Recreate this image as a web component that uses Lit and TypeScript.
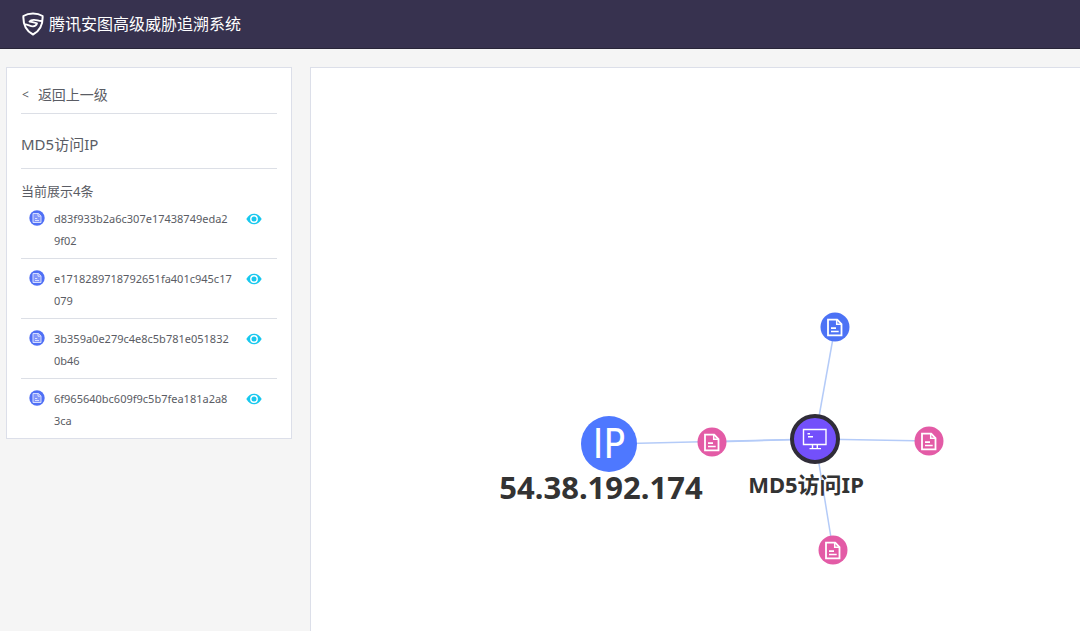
import { LitElement, html, css, svg } from "lit";
import { customElement, property } from "lit/decorators.js";

const FONT = css`"Noto Sans", "Noto Sans CJK SC", sans-serif`;

const HASHES = [
  "d83f933b2a6c307e17438749eda29f02",
  "e1718289718792651fa401c945c17079",
  "3b359a0e279c4e8c5b781e0518320b46",
  "6f965640bc609f9c5b7fea181a2a83ca",
];

type Kind = "ip" | "hub" | "sample" | "origin";

interface GraphNode {
  id: string;
  kind: Kind;
  x: number;
  y: number;
  title: string;
}

const NODES: GraphNode[] = [
  { id: "ip", kind: "ip", x: 298, y: 376, title: "54.38.192.174" },
  { id: "hub", kind: "hub", x: 504, y: 371, title: "MD5访问IP" },
  { id: "a", kind: "sample", x: 401, y: 374, title: HASHES[0] },
  { id: "b", kind: "sample", x: 618, y: 373, title: HASHES[1] },
  { id: "c", kind: "sample", x: 522, y: 482, title: HASHES[2] },
  { id: "d", kind: "origin", x: 524, y: 259, title: HASHES[3] },
];

const EDGES = [
  ["ip", "hub"],
  ["a", "hub"],
  ["b", "hub"],
  ["c", "hub"],
  ["d", "hub"],
];

const LABELS = [
  { text: "54.38.192.174", x: 290, y: 419, size: "large" },
  { text: "MD5访问IP", x: 495, y: 416, size: "medium" },
];

const fileShape = svg`
  <path d="M1.500 1h9l4.500 4.500V17H1.500z" fill="none" stroke="currentColor" stroke-width="1.800"/>
  <path d="M10.200 1v4.800H15" fill="none" stroke="currentColor" stroke-width="1.500"/>
  <path d="M4.500 9.600h5M4.500 13h7.700" fill="none" stroke="currentColor" stroke-width="1.700"/>`;

@customElement("app-header")
class AppHeader extends LitElement {
  static styles = css`
    :host {
      display: flex;
      align-items: center;
      gap: 5px;
      height: 49px;
      box-sizing: border-box;
      padding: 0 22px;
      background: #37324f;
      border-bottom: 1px solid #282538;
      color: #fff;
      font-family: ${FONT};
    }
    .logo {
      width: 22px;
      height: 24px;
      flex: none;
    }
    .title {
      margin: 0;
      font-size: 16px;
      line-height: 24px;
      font-weight: 400;
    }
  `;
  render() {
    return html`
      <svg class="logo" viewBox="0 0 22 24" fill="none" stroke="#fff" stroke-width="2" stroke-linejoin="round" stroke-linecap="round" aria-hidden="true">
        <path d="M11 1.500c3.500 0 6.800.8 9.600 2.500C21 12.500 18 19 11 22.500 4 19 1 12.500 1.400 4 4.200 2.300 7.500 1.500 11 1.500z" />
        <path d="M19.500 9c-2.800.2-5-1.400-7.800-1.200-2 .1-3.500.8-4.200 1.700 2.300.1 4.500 1.300 7.500 1.900-.6 1.700-2 2.800-4 3-2.700.2-4.800-1.900-8-2.100" stroke-width="1.800" />
      </svg>
      <h1 class="title">腾讯安图高级威胁追溯系统</h1>
    `;
  }
}

@customElement("hash-item")
class HashItem extends LitElement {
  @property() hash = "";
  static styles = css`
    :host {
      display: flex;
      align-items: flex-start;
      padding: 9px 15px 6px 8px;
      color: #5a5c64;
      font-family: ${FONT};
    }
    .badge {
      width: 16px;
      height: 16px;
      flex: none;
      margin-top: 2px;
    }
    .hash {
      flex: 1;
      min-width: 0;
      margin: 0 13px 0 9px;
      font-size: 11px;
      line-height: 22px;
      word-break: break-all;
    }
    .eye {
      flex: none;
      width: 16px;
      height: 22px;
      padding: 0;
      border: 0;
      background: none;
      cursor: pointer;
    }
    .eye svg {
      display: block;
      width: 16px;
      height: 22px;
    }
  `;
  render() {
    return html`
      <svg class="badge" viewBox="0 0 16 16" aria-hidden="true">
        <circle cx="8" cy="8" r="7.700" fill="#5070f5" />
        <path d="M4 3.500h5.600L12 5.900v6.600H4z" fill="#8296fa" stroke="#d3dcff" />
        <path d="M9 3.600v2.600h2.600M6 8.500h2.200M6 10.500h4" fill="none" stroke="#e4e9ff" stroke-width=".9" />
      </svg>
      <span class="hash">${this.hash}</span>
      <button class="eye" aria-label="查看">
        <svg viewBox="0 0 16 22" aria-hidden="true">
          <path d="M.3 11C2.300 7.500 4.900 5.800 8 5.800s5.700 1.700 7.700 5.200c-2 3.500-4.600 5.200-7.700 5.200S2.300 14.500.3 11z" fill="#18c8ee" />
          <circle cx="8" cy="11" r="3.200" fill="#18c8ee" stroke="#fff" stroke-width="1.400" />
        </svg>
      </button>
    `;
  }
}

@customElement("side-panel")
class SidePanel extends LitElement {
  static styles = css`
    :host {
      display: block;
      box-sizing: border-box;
      padding: 0 14px;
      background: #fff;
      border: 1px solid #dcdfe9;
      color: #5a5c64;
      font-family: ${FONT};
    }
    .back {
      display: flex;
      gap: 9px;
      padding: 16px 1px 8px;
      border-bottom: 1px solid #dcdfe6;
      color: inherit;
      font-size: 14px;
      line-height: 21px;
      text-decoration: none;
    }
    .arrow {
      font-size: 12px;
    }
    .heading {
      margin: 0;
      padding: 18px 0 12px;
      border-bottom: 1px solid #dcdfe6;
      font-size: 15px;
      line-height: 24px;
      font-weight: 400;
    }
    .count {
      margin: 0;
      padding-top: 14px;
      font-size: 13px;
      line-height: 16px;
    }
    .list {
      margin: 0;
      padding: 0;
      list-style: none;
    }
    .row + .row {
      border-top: 1px solid #dcdfe6;
    }
  `;
  render() {
    return html`
      <a class="back" href="#"><span class="arrow">&lt;</span><span>返回上一级</span></a>
      <h2 class="heading">MD5访问IP</h2>
      <p class="count">当前展示4条</p>
      <ul class="list">
        ${HASHES.map((h) => html`<li class="row"><hash-item .hash=${h}></hash-item></li>`)}
      </ul>
    `;
  }
}

@customElement("threat-graph")
class ThreatGraph extends LitElement {
  static styles = css`
    :host {
      display: block;
      position: relative;
      overflow: hidden;
      background: #fff;
      border: 1px solid #dcdfe9;
      border-width: 1px 0 0 1px;
      font-family: ${FONT};
    }
    .edges {
      position: absolute;
      inset: 0;
      width: 100%;
      height: 100%;
    }
    .node {
      position: absolute;
      display: flex;
      align-items: center;
      justify-content: center;
      box-sizing: border-box;
      width: 29px;
      height: 29px;
      padding: 0;
      border: 0;
      border-radius: 50%;
      color: #fff;
      font-family: inherit;
      transform: translate(-50%, -50%);
      cursor: pointer;
    }
    .sample {
      background: #e35ba6;
    }
    .origin {
      background: #4c72f5;
    }
    .ip {
      width: 56px;
      height: 56px;
      background: #4e78ff;
    }
    .hub {
      width: 50px;
      height: 50px;
      background: #7350fb;
      border: 4px solid #302d38;
    }
    .glyph {
      display: block;
      width: 17px;
      height: 18px;
    }
    .screen {
      display: block;
      width: 26px;
      height: 24px;
    }
    .letters {
      font-size: 40px;
      line-height: 56px;
      font-family: "DejaVu Sans Condensed", Lato, sans-serif;
      font-weight: 400;
    }
    .label {
      position: absolute;
      transform: translate(-50%, -50%);
      color: #333;
      font-weight: 700;
      white-space: nowrap;
    }
    .large {
      font-size: 31px;
      line-height: 40px;
    }
    .medium {
      font-size: 22px;
      line-height: 32px;
    }
  `;

  glyph(kind: Kind) {
    if (kind === "ip") return html`<span class="letters">IP</span>`;
    if (kind === "hub")
      return html`<svg class="screen" viewBox="0 0 26 24" fill="none" stroke="currentColor" stroke-width="1.400" aria-hidden="true">
        <path d="M1.500 2.500h22.500v15H1.500z" />
        <path d="M5.500 6.800h2.500M6 9.800h5M10.500 17.500v3.700M15.300 17.500v3.700M7.500 21.600h11.500" />
      </svg>`;
    return html`<svg class="glyph" viewBox="0 0 17 18" aria-hidden="true">${fileShape}</svg>`;
  }

  render() {
    const at = (id: string) => NODES.find((n) => n.id === id)!;
    return html`
      <svg class="edges" aria-hidden="true">
        ${EDGES.map(([from, to]) => {
          const a = at(from);
          const b = at(to);
          return svg`<line x1=${a.x} y1=${a.y} x2=${b.x} y2=${b.y} stroke="#b4cbf8" stroke-width="1.500" />`;
        })}
      </svg>
      ${NODES.map(
        (n) => html`<button class="node ${n.kind}" aria-label=${n.title} style="left:${n.x}px;top:${n.y}px">
          ${this.glyph(n.kind)}
        </button>`
      )}
      ${LABELS.map((l) => html`<span class="label ${l.size}" style="left:${l.x}px;top:${l.y}px">${l.text}</span>`)}
    `;
  }
}

@customElement("app-root")
class AppRoot extends LitElement {
  static styles = css`
    :host {
      display: flex;
      flex-direction: column;
      min-height: 100vh;
      background: #f5f5f5;
    }
    .content {
      flex: 1;
      display: grid;
      grid-template-columns: 286px minmax(0, 1fr);
      column-gap: 18px;
      padding: 18px 0 0 6px;
    }
    .side {
      align-self: start;
    }
  `;
  render() {
    return html`
      <app-header></app-header>
      <main class="content">
        <side-panel class="side"></side-panel>
        <threat-graph></threat-graph>
      </main>
    `;
  }
}
